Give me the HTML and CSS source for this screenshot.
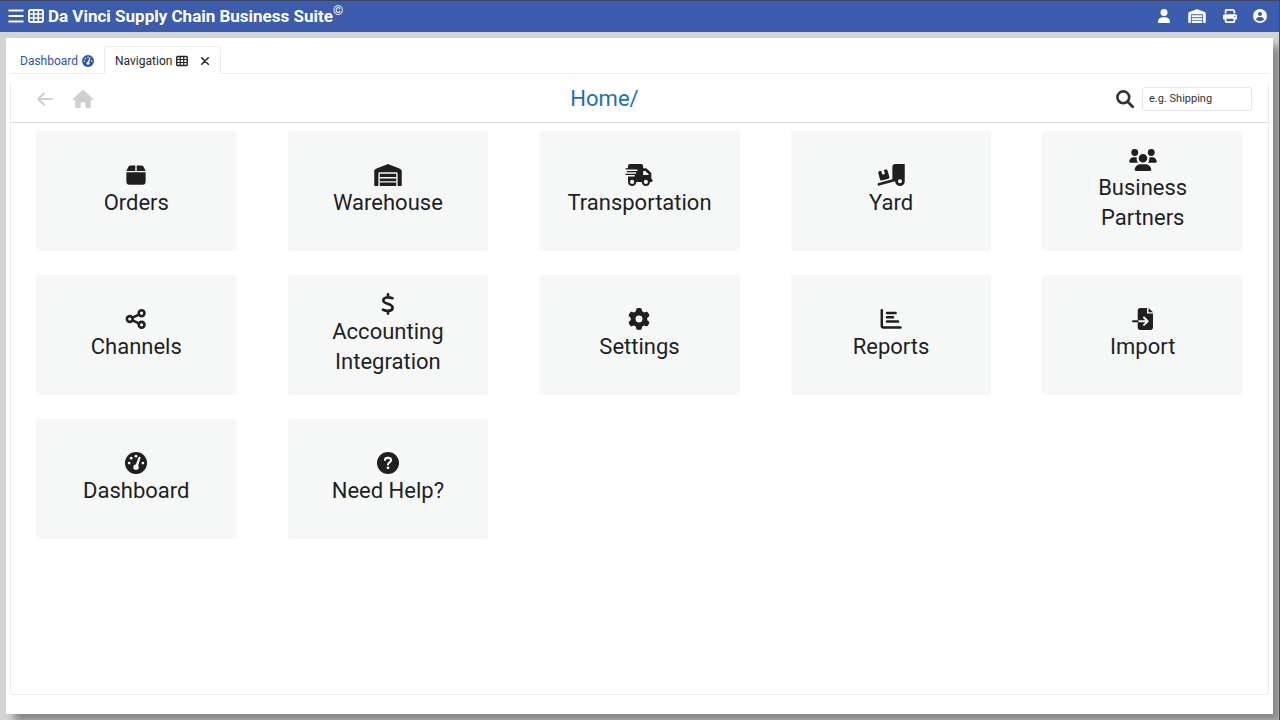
FILE: index.html
```html
<!DOCTYPE html>
<html lang="en">
<head>
<meta charset="utf-8">
<title>Da Vinci Supply Chain Business Suite</title>
<link rel="stylesheet" href="styles.css">
</head>
<body>
<svg class="sprite" aria-hidden="true">
  <symbol id="table" viewBox="0 0 16 14"><rect x="1" y="1" width="14" height="12" rx="1.5" fill="none" stroke="currentColor" stroke-width="1.900"/><path d="M1 5h14M1 9h14M5.700 1v12M10.300 1v12" fill="none" stroke="currentColor" stroke-width="1.600"/></symbol>
  <symbol id="gauge" viewBox="0 0 512 512"><circle cx="256" cy="256" r="256" fill="currentColor"/><g class="cut"><circle cx="256" cy="96" r="32"/><circle cx="144" cy="144" r="32"/><circle cx="96" cy="256" r="32"/><circle cx="416" cy="256" r="32"/><circle cx="256" cy="352" r="62"/><path d="M347 110c13 5 19 19 13 32L294 360l-54-40 76-196c5-12 19-19 31-14z"/></g></symbol>
  <symbol id="warehouse" viewBox="0 0 640 512"><path fill="currentColor" d="M0 488V171.300c0-26.200 15.900-49.700 40.200-59.400L308.100 4.800c7.600-3.100 16.100-3.100 23.800 0L599.800 111.900c24.300 9.700 40.200 33.300 40.200 59.400V488c0 13.300-10.700 24-24 24H568c-13.300 0-24-10.700-24-24V224c0-17.700-14.300-32-32-32H128c-17.700 0-32 14.300-32 32V488c0 13.300-10.700 24-24 24H24c-13.300 0-24-10.700-24-24zm488 24H152c-13.300 0-24-10.700-24-24V432H512v56c0 13.300-10.700 24-24 24zM128 400V336H512v64H128zm0-96V224H512v80H128z"/></symbol>
  <symbol id="box" viewBox="0 0 448 512"><path fill="currentColor" d="M50.700 58.500L0 160H208V32H93.700C75.500 32 58.900 42.300 50.700 58.500zM240 160H448L397.300 58.500C389.100 42.300 372.500 32 354.300 32H240V160zm208 32H0V416c0 35.300 28.700 64 64 64H384c35.300 0 64-28.700 64-64V192z"/></symbol>
  <symbol id="truck" viewBox="0 0 640 512"><path fill="currentColor" d="M112 0C85.500 0 64 21.500 64 48V96H16c-8.800 0-16 7.200-16 16s7.200 16 16 16H64 272c8.800 0 16 7.200 16 16s-7.200 16-16 16H64 48c-8.800 0-16 7.200-16 16s7.200 16 16 16H64 240c8.800 0 16 7.200 16 16s-7.200 16-16 16H64 16c-8.800 0-16 7.200-16 16s7.200 16 16 16H64 208c8.800 0 16 7.200 16 16s-7.200 16-16 16H64V416c0 53 43 96 96 96s96-43 96-96H384c0 53 43 96 96 96s96-43 96-96h32c17.700 0 32-14.300 32-32s-14.300-32-32-32V288 237.300c0-17-6.700-33.300-18.700-45.300L512 114.700c-12-12-28.300-18.700-45.300-18.700H416V48c0-26.500-21.500-48-48-48H112zM544 237.300V256H416V160h50.700L544 237.300zM160 368a48 48 0 1 1 0 96 48 48 0 1 1 0-96zm272 48a48 48 0 1 1 96 0 48 48 0 1 1 -96 0z"/></symbol>
  <symbol id="ramp" viewBox="0 0 640 512"><path fill="currentColor" d="M640 0V400c0 61.900-50.100 112-112 112c-61 0-110.500-48.700-112-109.300L48.400 502.900c-17.100 4.600-34.600-5.400-39.300-22.500s5.400-34.600 22.500-39.300L352 353.800V64c0-35.300 28.700-64 64-64H640zM576 400a48 48 0 1 0 -96 0 48 48 0 1 0 96 0zM23.100 207.700c-4.600-17.100 5.600-34.600 22.600-39.200l46.400-12.400 20.700 77.300c2.300 8.500 11.100 13.600 19.600 11.300l30.900-8.300c8.500-2.300 13.600-11.100 11.300-19.600l-20.700-77.300 46.400-12.400c17.100-4.600 34.600 5.600 39.200 22.600l41.400 154.500c4.600 17.100-5.600 34.600-22.600 39.200L103.700 384.900c-17.100 4.600-34.600-5.600-39.200-22.600L23.100 207.700z"/></symbol>
  <symbol id="users" viewBox="0 0 640 512"><path fill="currentColor" d="M128 0a80 80 0 1 1 0 160A80 80 0 1 1 128 0zM512 0a80 80 0 1 1 0 160A80 80 0 1 1 512 0zM0 298.700C0 239.800 47.800 192 106.700 192h42.700c10 0 18 1.500 26 4c-2 9-3 18-3 28c0 38 12 70 32 96H21.300C9.600 320 0 310.400 0 298.700zM435.600 320c20-26 32-58 32-96c0-10-1-19-3-28c8-2.500 16-4 26-4h42.700C592.200 192 640 239.800 640 298.700c0 11.800-9.600 21.300-21.300 21.300H435.600zM220 216a100 100 0 1 1 200 0 100 100 0 1 1 -200 0zM128 485.300C128 411.700 187.700 352 261.300 352H378.700C452.300 352 512 411.700 512 485.300c0 14.700-11.900 26.700-26.700 26.700H154.700c-14.700 0-26.700-11.900-26.700-26.700z"/></symbol>
  <symbol id="share" viewBox="0 0 22 22"><g fill="none" stroke="currentColor" stroke-width="2.600"><circle cx="4.800" cy="11" r="2.900"/><circle cx="16.600" cy="5.200" r="2.900"/><circle cx="16.600" cy="16.800" r="2.900"/><path d="M7.500 9.700l6.400-3.100M7.500 12.300l6.400 3.100"/></g></symbol>
  <symbol id="dollar" viewBox="0 0 14 22"><path fill="none" stroke="currentColor" stroke-width="2.700" stroke-linecap="round" stroke-linejoin="round" d="M7 1.400v3M7 18v2.600M11.500 5.200C7.500 3.900 2.900 4 2.300 7.200c-.7 4 9.900 3 9.300 7.500-.5 3.900-5.700 3.700-9.600 2"/></symbol>
  <symbol id="gear" viewBox="0 0 512 512"><path fill="currentColor" d="M495.900 166.600c3.200 8.700 .5 18.400-6.400 24.600l-43.300 39.400c1.100 8.300 1.700 16.800 1.700 25.400s-.6 17.100-1.700 25.400l43.300 39.400c6.900 6.200 9.600 15.900 6.400 24.600c-4.400 11.900-9.700 23.300-15.800 34.300l-4.700 8.100c-6.600 11-14 21.400-22.100 31.200c-5.900 7.200-15.700 9.600-24.500 6.800l-55.700-17.700c-13.400 10.300-28.200 18.900-44 25.400l-12.500 57.100c-2 9.100-9 16.300-18.200 17.800c-13.800 2.300-28 3.500-42.500 3.500s-28.700-1.200-42.500-3.500c-9.200-1.500-16.200-8.700-18.200-17.800l-12.500-57.100c-15.800-6.500-30.600-15.100-44-25.400L83.100 425.900c-8.800 2.800-18.600 .3-24.500-6.800c-8.100-9.800-15.500-20.200-22.100-31.200l-4.700-8.100c-6.100-11-11.400-22.400-15.800-34.300c-3.200-8.700-.5-18.400 6.400-24.600l43.300-39.400C64.600 273.100 64 264.600 64 256s.6-17.100 1.700-25.400L22.400 191.200c-6.900-6.200-9.600-15.900-6.400-24.600c4.400-11.900 9.700-23.300 15.800-34.300l4.700-8.100c6.600-11 14-21.400 22.100-31.200c5.900-7.200 15.700-9.600 24.500-6.800l55.700 17.700c13.400-10.300 28.200-18.900 44-25.400l12.500-57.100c2-9.100 9-16.300 18.200-17.800C227.300 1.200 241.500 0 256 0s28.700 1.200 42.500 3.500c9.200 1.500 16.200 8.700 18.200 17.800l12.500 57.100c15.800 6.500 30.600 15.100 44 25.400l55.700-17.700c8.800-2.800 18.600-.3 24.500 6.800c8.100 9.800 15.500 20.200 22.100 31.200l4.700 8.100c6.100 11 11.400 22.400 15.800 34.300zM256 336a80 80 0 1 0 0-160 80 80 0 1 0 0 160z"/></symbol>
  <symbol id="chart" viewBox="0 0 22 22"><path fill="none" stroke="currentColor" stroke-width="2.500" stroke-linecap="round" d="M1.800 2.200v15.500c0 1 .6 1.700 1.700 1.700h17M7 4.900h8.600M7 9.200h6M7 13.500h11"/></symbol>
  <symbol id="import" viewBox="0 0 22 22"><path fill="currentColor" d="M8.200 0H15v5.500h6v14c0 1.400-1.100 2.500-2.500 2.500H8.200c-1.400 0-2.500-1.100-2.500-2.500v-17C5.700 1.100 6.800 0 8.200 0zM16.500 0l4.500 4.200h-4.500z"/><path class="cut-line" fill="none" stroke-width="2" stroke-linecap="round" stroke-linejoin="round" d="M6 13.200h9M12 9.500l3.700 3.700-3.700 3.700"/><path fill="none" stroke="currentColor" stroke-width="2" stroke-linecap="round" d="M1 13.200h4.700"/></symbol>
  <symbol id="help" viewBox="0 0 22 22"><circle cx="11" cy="11" r="11" fill="currentColor"/><path class="cut-line" fill="none" stroke-width="2.100" stroke-linecap="round" stroke-linejoin="round" d="M8 8c0-1.500 1.100-2.100 2.900-2.100 2 0 3.200.9 3.200 2.400 0 2-3.100 2-3.100 4.100"/><circle class="cut" cx="11" cy="15.800" r="1.400"/></symbol>
  <symbol id="home" viewBox="0 0 576 512"><path fill="currentColor" d="M575.800 255.500c0 18-15 32.100-32 32.100h-32l.7 184.400c0 22.100-17.900 40-40 40H392c-22.100 0-40-17.900-40-40V384c0-17.700-14.300-32-32-32H256c-17.700 0-32 14.300-32 32v88c0 22.100-17.900 40-40 40H104c-22.100 0-40-17.900-40-40V287.600H32c-18 0-32-14-32-32.100c0-9 3-17 10-24L266.400 8c7-7 15-8 22-8s15 2 21 7L564.800 231.500c8 7 12 15 11 24z"/></symbol>
  <symbol id="back" viewBox="0 0 16 14"><path fill="none" stroke="currentColor" stroke-width="2" stroke-linecap="round" stroke-linejoin="round" d="M15 7H1.500M7 1.300L1.300 7 7 12.700"/></symbol>
  <symbol id="search" viewBox="0 0 18 18"><circle cx="7.300" cy="7.300" r="5.900" fill="none" stroke="currentColor" stroke-width="2.600"/><path d="M11.700 11.700l5 5" stroke="currentColor" stroke-width="2.800" stroke-linecap="round"/></symbol>
  <symbol id="close" viewBox="0 0 10 10"><path d="M1.700 1.700l6.600 6.600M8.300 1.700l-6.600 6.600" stroke="currentColor" stroke-width="1.500" stroke-linecap="round"/></symbol>
  <symbol id="menu" viewBox="0 0 16 14"><path d="M1.200 1.500h13.600M1.200 7h13.600M1.200 12.500h13.600" stroke="currentColor" stroke-width="1.900" stroke-linecap="round"/></symbol>
  <symbol id="user" viewBox="0 0 448 512"><path fill="currentColor" d="M224 256a128 128 0 1 0 0-256 128 128 0 1 0 0 256zM178.300 304C79.800 304 0 383.800 0 482.300 0 498.700 13.300 512 29.700 512h388.600c16.400 0 29.700-13.300 29.700-29.700C448 383.800 368.200 304 269.700 304z"/></symbol>
  <symbol id="print" viewBox="0 0 512 512"><path fill="currentColor" d="M128 0C92.700 0 64 28.700 64 64v96h64V64H354.700L384 93.300V160h64V93.300c0-17-6.700-33.300-18.700-45.300L400 18.700C388 6.700 371.700 0 354.700 0H128zM384 352v96H128V352H384zm64 32h32c17.700 0 32-14.300 32-32V256c0-35.300-28.700-64-64-64H64c-35.300 0-64 28.700-64 64v96c0 17.700 14.300 32 32 32H64v64c0 35.300 28.700 64 64 64H384c35.300 0 64-28.700 64-64V384zM432 248a24 24 0 1 1 0 48 24 24 0 1 1 0-48z"/></symbol>
  <symbol id="account" viewBox="0 0 14 14"><circle cx="7" cy="7" r="7" fill="currentColor"/><circle class="cut" cx="7" cy="5" r="2.100"/><path class="cut" d="M3 10.500C3.300 8.900 4.500 8 6 8h2c1.500 0 2.700.9 3 2.500C9.900 11.600 8.500 12.200 7 12.200s-2.900-.6-4-1.700z"/></symbol>
</svg>

<header class="topbar">
  <button class="icon-button" aria-label="Menu"><svg class="icon-menu"><use href="#menu"/></svg></button>
  <button class="icon-button" aria-label="Navigation grid"><svg class="icon-menu"><use href="#table"/></svg></button>
  <h1 class="brand">Da Vinci Supply Chain Business Suite<sup class="mark">©</sup></h1>
  <nav class="top-actions" aria-label="Account">
    <button class="icon-button" aria-label="User"><svg class="icon-small"><use href="#user"/></svg></button>
    <button class="icon-button" aria-label="Warehouse"><svg class="icon-wide"><use href="#warehouse"/></svg></button>
    <button class="icon-button" aria-label="Print"><svg class="icon-small"><use href="#print"/></svg></button>
    <button class="icon-button" aria-label="Account"><svg class="icon-small"><use href="#account"/></svg></button>
  </nav>
</header>

<main class="panel">
  <nav class="tabs" aria-label="Open pages">
    <button class="tab">Dashboard <svg class="icon-tab"><use href="#gauge"/></svg></button>
    <div class="tab tab-active">
      <button class="tab-label">Navigation <svg class="icon-tab"><use href="#table"/></svg></button>
      <button class="icon-button" aria-label="Close tab"><svg class="icon-close"><use href="#close"/></svg></button>
    </div>
  </nav>
  <section class="content">
    <div class="toolbar">
      <div class="history">
        <button class="icon-button" aria-label="Back"><svg class="icon-back"><use href="#back"/></svg></button>
        <button class="icon-button" aria-label="Home"><svg class="icon-home"><use href="#home"/></svg></button>
      </div>
      <a class="crumb" href="#">Home/</a>
      <div class="search">
        <label for="search-box" aria-label="Search"><svg class="icon-search"><use href="#search"/></svg></label>
        <input id="search-box" class="search-box" type="text" placeholder="e.g. Shipping">
      </div>
    </div>
    <div class="tiles">
      <button class="tile"><svg class="tile-icon"><use href="#box"/></svg>Orders</button>
      <button class="tile"><svg class="tile-icon"><use href="#warehouse"/></svg>Warehouse</button>
      <button class="tile"><svg class="tile-icon"><use href="#truck"/></svg>Transportation</button>
      <button class="tile"><svg class="tile-icon"><use href="#ramp"/></svg>Yard</button>
      <button class="tile"><svg class="tile-icon"><use href="#users"/></svg>Business Partners</button>
      <button class="tile"><svg class="tile-icon"><use href="#share"/></svg>Channels</button>
      <button class="tile"><svg class="tile-icon"><use href="#dollar"/></svg>Accounting Integration</button>
      <button class="tile"><svg class="tile-icon"><use href="#gear"/></svg>Settings</button>
      <button class="tile"><svg class="tile-icon"><use href="#chart"/></svg>Reports</button>
      <button class="tile"><svg class="tile-icon"><use href="#import"/></svg>Import</button>
      <button class="tile"><svg class="tile-icon"><use href="#gauge"/></svg>Dashboard</button>
      <button class="tile"><svg class="tile-icon"><use href="#help"/></svg>Need Help?</button>
    </div>
  </section>
</main>
</body>
</html>
```

FILE: styles.css
```css
* {
  box-sizing: border-box;
}

body {
  --surface: #fff;
  margin: 0;
  min-height: 100vh;
  display: flex;
  flex-direction: column;
  background: #d3d3d3;
  color: #1f1f1f;
  font-family: Roboto, "Liberation Sans", sans-serif;
  font-size: 12px;
  border-right: 1px solid #4a4a50;
}

button {
  font: inherit;
  color: inherit;
  background: none;
  border: 0;
  padding: 0;
  cursor: pointer;
}

svg {
  display: block;
  flex: none;
}

.sprite {
  position: absolute;
  width: 0;
  height: 0;
}

.cut {
  fill: var(--surface);
}

.cut-line {
  stroke: var(--surface);
}

.topbar {
  --surface: #3c5cad;
  display: flex;
  align-items: center;
  gap: 4px;
  height: 32px;
  padding: 0 12px 2px 8px;
  background: #3c5cad;
  border-top: 1px solid #3d4463;
  color: #fff;
}

.brand {
  margin: 0;
  font-size: 17px;
  line-height: 28px;
  font-weight: 700;
}

.mark {
  font-size: 13px;
  line-height: 0;
  font-weight: 400;
}

.top-actions {
  display: flex;
  align-items: center;
  gap: 16px;
  margin-left: auto;
}

.icon-menu {
  width: 16px;
  height: 14px;
}

.icon-wide {
  width: 20px;
  height: 14px;
}

.icon-small {
  width: 14px;
  height: 14px;
}

.panel {
  flex: 1;
  display: flex;
  flex-direction: column;
  margin: 6px;
  padding: 8px 4px 19px;
  background: #fff;
  box-shadow: 8px 8px 8px #888;
}

.tabs {
  display: flex;
  height: 28px;
  border-bottom: 1px solid #ececec;
}

.tab {
  display: flex;
  align-items: center;
  gap: 4px;
  height: 28px;
  padding: 0 9px 0 10px;
  border: 1px solid transparent;
  border-left: 0;
  border-bottom: 0;
  color: #2f54ac;
}

.tab-active {
  gap: 12px;
  padding: 0 10px;
  background: #fff;
  border-color: #ececec;
  border-left: 1px solid #ececec;
  border-radius: 3px 3px 0 0;
  color: #262626;
}

.tab-label {
  display: flex;
  align-items: center;
  gap: 4px;
}

.icon-tab {
  width: 12px;
  height: 12px;
}

.icon-close {
  width: 10px;
  height: 10px;
}

.content {
  flex: 1;
  margin-top: 9px;
  border: 1px solid #ececec;
  border-top: 0;
  border-radius: 0 0 4px 4px;
}

.toolbar {
  display: flex;
  justify-content: space-between;
  align-items: center;
  height: 40px;
  padding: 0 16px 8px 26px;
  border-bottom: 1px solid #d9d9d9;
}

.history {
  display: flex;
  align-items: center;
  gap: 20px;
  color: #cfcfcf;
}

.icon-back {
  width: 16px;
  height: 14px;
}

.icon-home {
  width: 20px;
  height: 18px;
}

.crumb {
  color: #1d6fb8;
  font-size: 22px;
  line-height: 30px;
  text-decoration: none;
}

.search {
  display: flex;
  align-items: center;
  gap: 8px;
  color: #333;
}

.icon-search {
  width: 18px;
  height: 18px;
}

.search-box {
  width: 110px;
  height: 24px;
  padding: 0 6px;
  border: 1px solid #e6e6e6;
  border-radius: 3px;
  background: #fff;
  font: inherit;
  font-size: 11px;
}

.search-box::placeholder {
  color: #333;
  opacity: 1;
}

.tiles {
  display: grid;
  grid-template-columns: repeat(5, 1fr);
  gap: 24px 51px;
  padding: 8px 25px 24px;
}

.tile {
  --surface: #f6f8f8;
  display: flex;
  flex-direction: column;
  align-items: center;
  justify-content: center;
  min-height: 120px;
  padding: 0 24px;
  background: #f6f8f8;
  border-radius: 3px;
  font-size: 22px;
  line-height: 30px;
}

.tile-icon {
  width: 28px;
  height: 22px;
  margin-bottom: 2px;
}
```
